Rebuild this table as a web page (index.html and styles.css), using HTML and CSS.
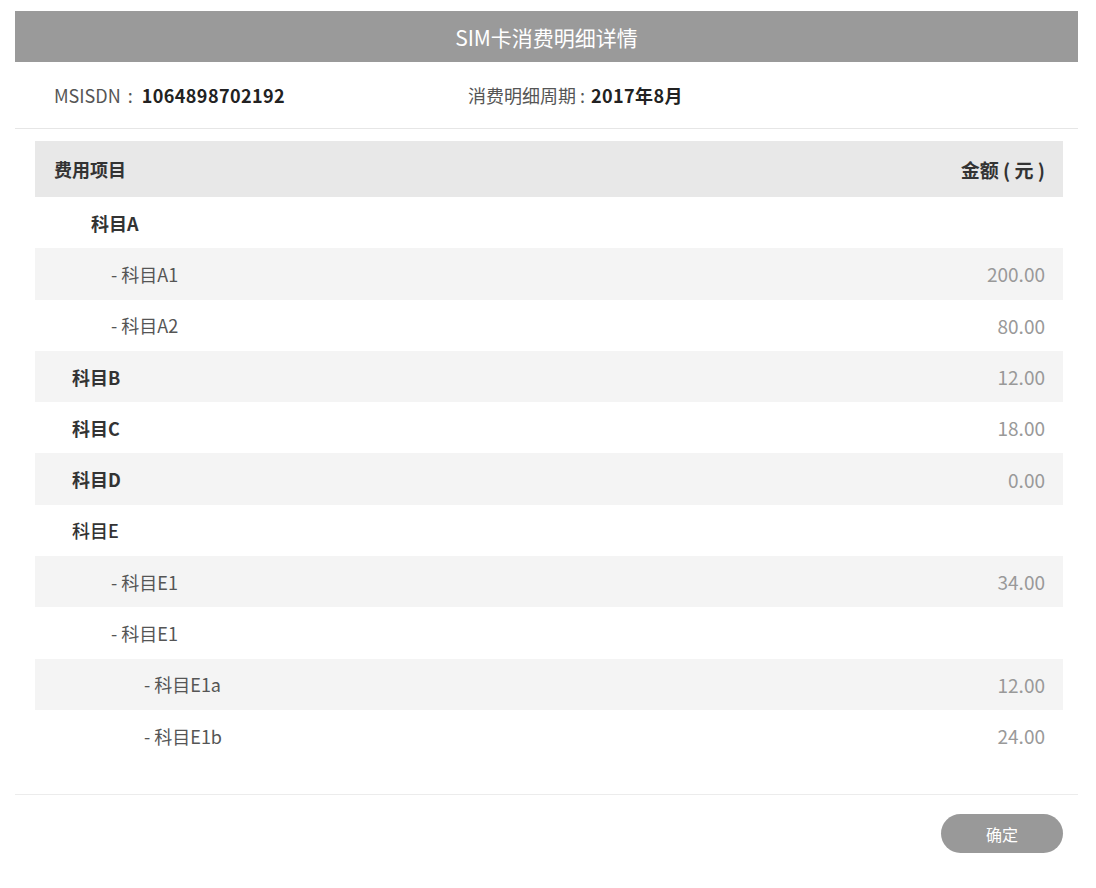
FILE: index.html
```html
<!DOCTYPE html>
<html lang="zh-CN">
<head>
<meta charset="utf-8">
<title>SIM卡消费明细详情</title>
<link rel="stylesheet" href="styles.css">
</head>
<body>
<div class="dialog">
  <div class="dialog-title">SIM卡消费明细详情</div>
  <div class="info">
    <div class="info-item info-msisdn"><span class="label">MSISDN</span><span class="colon wide">:</span><span class="value">1064898702192</span></div>
    <div class="info-item"><span class="label">消费明细周期</span><span class="colon">:</span><span class="value">2017年8月</span></div>
  </div>
  <div class="table">
    <div class="row head"><span class="name">费用项目</span><span class="amount">金额 ( 元 )</span></div>
    <div class="row"><span class="name lv-a strong">科目A</span><span class="amount"></span></div>
    <div class="row alt"><span class="name lv1">- 科目A1</span><span class="amount">200.00</span></div>
    <div class="row"><span class="name lv1">- 科目A2</span><span class="amount">80.00</span></div>
    <div class="row alt"><span class="name lv0 strong">科目B</span><span class="amount">12.00</span></div>
    <div class="row"><span class="name lv0 strong">科目C</span><span class="amount">18.00</span></div>
    <div class="row alt"><span class="name lv0 strong">科目D</span><span class="amount">0.00</span></div>
    <div class="row"><span class="name lv0 medium">科目E</span><span class="amount"></span></div>
    <div class="row alt"><span class="name lv1">- 科目E1</span><span class="amount">34.00</span></div>
    <div class="row"><span class="name lv1">- 科目E1</span><span class="amount"></span></div>
    <div class="row alt"><span class="name lv2">- 科目E1a</span><span class="amount">12.00</span></div>
    <div class="row"><span class="name lv2">- 科目E1b</span><span class="amount">24.00</span></div>
  </div>
  <div class="footer">
    <button class="btn-ok" type="button">确定</button>
  </div>
</div>
</body>
</html>
```
FILE: styles.css
```css
html, body {
  margin: 0;
  padding: 0;
  background: #ffffff;
}
body {
  font-family: "Noto Sans CJK SC", "Noto Sans", sans-serif;
  color: #333;
}
.dialog {
  width: 1063px;
  margin: 11px 0 0 15px;
}
.dialog-title {
  height: 51px;
  background: #9a9a9a;
  color: #fff;
  font-size: 21px;
  display: flex;
  align-items: center;
  justify-content: center;
}
.info {
  height: 66px;
  border-bottom: 1px solid #e6e6e6;
  display: flex;
  align-items: center;
  padding-left: 39px;
  font-size: 18px;
}
.info-msisdn {
  width: 414px;
}
.info .label {
  color: #555;
}
.info .colon {
  color: #555;
  margin: 0 6px 0 4px;
}
.info .colon.wide {
  margin: 0 9px 0 7px;
}
.info .value {
  color: #222;
  font-weight: 700;
  letter-spacing: 0.4px;
}
.table {
  margin: 12px 15px 0 20px;
}
.row {
  height: 51.3px;
  display: flex;
  align-items: center;
  justify-content: space-between;
  padding: 0 18px 0 19px;
  font-size: 18px;
}
.row.alt {
  background: #f4f4f4;
}
.row.head {
  height: 56px;
  background: #e8e8e8;
  font-weight: 700;
  color: #333;
  font-size: 18px;
}
.name {
  color: #555;
}
.head .name, .head .amount {
  color: #333;
  white-space: pre;
}
.strong {
  color: #333;
  font-weight: 700;
}
.medium {
  color: #333;
  font-weight: 500;
}
.lv0 { padding-left: 18px; }
.lv-a { padding-left: 37px; }
.lv1 { padding-left: 57px; }
.lv2 { padding-left: 90px; }
.amount {
  color: #999;
  font-size: 19px;
}
.footer {
  margin-top: 33px;
  border-top: 1px solid #ececec;
  display: flex;
  justify-content: flex-end;
  padding: 19px 15px 0 0;
}
.btn-ok {
  width: 122px;
  height: 39px;
  border: none;
  border-radius: 20px;
  background: #999;
  color: #fff;
  font-family: "Noto Sans CJK SC", sans-serif;
  font-size: 16px;
  padding: 0;
}
```
